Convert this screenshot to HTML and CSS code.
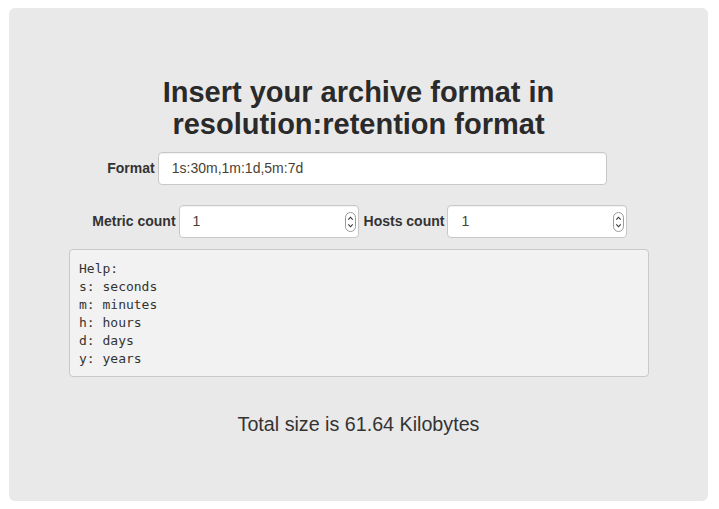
FILE: index.html
```html
<!DOCTYPE html>
<html>
<head>
<meta charset="utf-8">
<link rel="stylesheet" href="styles.css">
</head>
<body>
<div class="jumbotron">
  <h1 class="title">Insert your archive format in<br>resolution:retention format</h1>
  <div class="row row-format">
    <label class="lbl">Format</label>
    <div class="field field-wide"><span class="val">1s:30m,1m:1d,5m:7d</span></div>
  </div>
  <div class="row row-counts">
    <label class="lbl lbl-metric">Metric count</label>
    <div class="field field-num"><span class="val">1</span>
      <svg class="spin" width="11" height="20" viewBox="0 0 11 20"><rect x="0.5" y="0.5" width="10" height="19" rx="5" fill="#fff" stroke="#9a9a9a"/><path d="M3.3 7.6 L5.5 5.2 L7.7 7.6" fill="none" stroke="#333" stroke-width="1.1"/><path d="M3.3 12.4 L5.5 14.8 L7.7 12.4" fill="none" stroke="#333" stroke-width="1.1"/></svg>
    </div>
    <label class="lbl lbl-hosts">Hosts count</label>
    <div class="field field-num"><span class="val">1</span>
      <svg class="spin" width="11" height="20" viewBox="0 0 11 20"><rect x="0.5" y="0.5" width="10" height="19" rx="5" fill="#fff" stroke="#9a9a9a"/><path d="M3.3 7.6 L5.5 5.2 L7.7 7.6" fill="none" stroke="#333" stroke-width="1.1"/><path d="M3.3 12.4 L5.5 14.8 L7.7 12.4" fill="none" stroke="#333" stroke-width="1.1"/></svg>
    </div>
  </div>
  <pre class="help">Help:
s: seconds
m: minutes
h: hours
d: days
y: years</pre>
  <p class="total">Total size is 61.64 Kilobytes</p>
</div>
</body>
</html>
```

FILE: styles.css
```css
html, body {
  margin: 0;
  padding: 0;
  background: #fff;
}
body {
  font-family: "Liberation Sans", Arial, sans-serif;
  color: #333;
}
.jumbotron {
  box-sizing: border-box;
  margin: 8px 0 0 9px;
  width: 699px;
  height: 493px;
  background: #e9e9e9;
  border-radius: 6px;
  padding-top: 68px;
  display: flex;
  flex-direction: column;
  align-items: center;
}
.title {
  margin: 0;
  font-size: 29px;
  line-height: 32px;
  font-weight: bold;
  text-align: center;
  color: #2a2a2a;
}
.row {
  display: flex;
  align-items: center;
  justify-content: center;
}
.row-format {
  margin-top: 12px;
  margin-left: -3px;
}
.row-counts {
  margin-top: 20px;
}
.lbl {
  font-size: 14px;
  font-weight: bold;
  color: #333;
  margin-right: 3px;
  position: relative;
  top: -1px;
}
.lbl-metric {
  min-width: 86px;
  text-align: right;
}
.lbl-hosts {
  margin-left: 5px;
}
.field {
  box-sizing: border-box;
  position: relative;
  height: 33px;
  background: #fff;
  border: 1px solid #c8c8c8;
  border-radius: 4px;
  box-shadow: inset 0 1px 1px rgba(0,0,0,0.06);
  display: flex;
  align-items: center;
  padding-left: 13px;
  font-size: 14px;
  color: #555;
}
.field-wide {
  width: 449px;
}
.field-num {
  width: 180px;
}
.val {
  color: #4a3f35;
  position: relative;
  top: -1px;
}
.spin {
  position: absolute;
  right: 2px;
  top: 6px;
}
.help {
  box-sizing: border-box;
  margin: 11px 0 0 1px;
  width: 580px;
  height: 128px;
  padding: 10px 9px 8px;
  background: #f2f2f2;
  border: 1px solid #c9c9c9;
  border-radius: 4px;
  font-family: "DejaVu Sans Mono", monospace;
  font-size: 13px;
  line-height: 18px;
  color: #333;
}
.total {
  margin: 35px 0 0 0;
  font-size: 19.7px;
  line-height: 24px;
  color: #333;
}
```
